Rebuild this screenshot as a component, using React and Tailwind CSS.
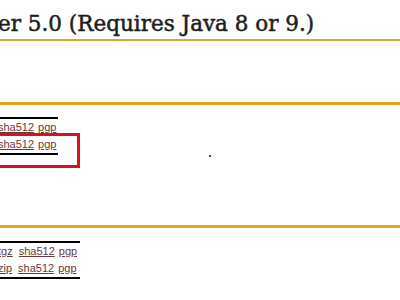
import React from 'react';

const linkCls = 'text-[#6a3a3a] underline';

function Dl({ pre }) {
  return (
    <div className="flex h-[17px] items-center whitespace-nowrap">
      {pre && <a className={`${linkCls} -ml-[2px] mr-[6px]`}>{pre}</a>}
      {!pre && <span className="-ml-[2px]" />}
      <a className={linkCls}>sha512</a>
      <a className={`${linkCls} ml-[4px]`}>pgp</a>
    </div>
  );
}

export default function App() {
  return (
    <div className="relative w-[400px] h-[300px] overflow-hidden bg-white" style={{ fontFamily: 'Arial, "Liberation Sans", sans-serif' }}>
      {/* heading */}
      <h2
        className="pt-[10px] pb-[2px] border-b-2 border-[#e5a72a] text-[21.5px] leading-[27px] text-[#1e1e1e] [-webkit-text-stroke:0.5px_#1e1e1e] -ml-[2px] whitespace-nowrap"
        style={{ fontFamily: '"DejaVu Serif", "Liberation Serif", serif' }}
      >
        er 5.0 (Requires Java 8 or 9.)
      </h2>

      <div className="mt-[61px] h-[3px] bg-[#e2a41c]" />

      {/* first table */}
      <div className="relative mt-[12px] w-[58px] border-t-2 border-b-2 border-black text-[11px]">
        <Dl />
        <Dl />
        <div className="absolute left-[-4px] top-[14px] w-[84px] h-[35px] border-[3px] border-[#d9111f]" />
      </div>

      <div className="absolute left-[209px] top-[155px] w-[2px] h-[2px] bg-[#444]" />

      <div className="mt-[70px] h-[3px] bg-[#e2a41c]" />

      {/* second table */}
      <div className="mt-[13px] w-[80px] border-t-2 border-b-2 border-black text-[11px]">
        <Dl pre="tgz" />
        <Dl pre="zip" />
      </div>
    </div>
  );
}
